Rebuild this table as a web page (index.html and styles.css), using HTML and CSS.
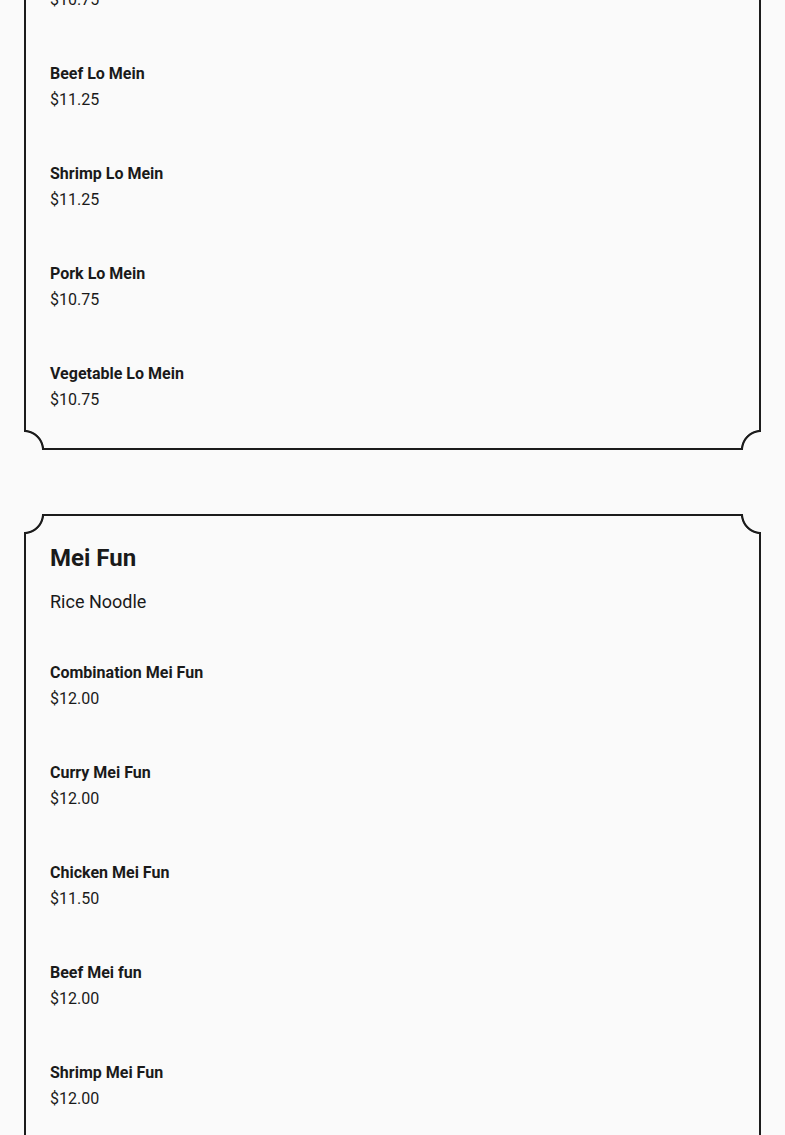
FILE: index.html
```html
<!DOCTYPE html>
<html lang="en">
<head>
<meta charset="utf-8">
<title>Menu</title>
<link rel="stylesheet" href="styles.css">
</head>
<body>
<main class="menu">
  <section class="card card-first">
    <h2 class="card-title">Lo Mein</h2>
    <p class="card-sub">Soft Noodle</p>
    <ul class="items">
      <li class="item"><span class="item-name">Chicken Lo Mein</span><span class="item-price">$10.75</span></li>
      <li class="item"><span class="item-name">Beef Lo Mein</span><span class="item-price">$11.25</span></li>
      <li class="item"><span class="item-name">Shrimp Lo Mein</span><span class="item-price">$11.25</span></li>
      <li class="item"><span class="item-name">Pork Lo Mein</span><span class="item-price">$10.75</span></li>
      <li class="item"><span class="item-name">Vegetable Lo Mein</span><span class="item-price">$10.75</span></li>
    </ul>
  </section>
  <section class="card">
    <h2 class="card-title">Mei Fun</h2>
    <p class="card-sub">Rice Noodle</p>
    <ul class="items">
      <li class="item"><span class="item-name">Combination Mei Fun</span><span class="item-price">$12.00</span></li>
      <li class="item"><span class="item-name">Curry Mei Fun</span><span class="item-price">$12.00</span></li>
      <li class="item"><span class="item-name">Chicken Mei Fun</span><span class="item-price">$11.50</span></li>
      <li class="item"><span class="item-name">Beef Mei fun</span><span class="item-price">$12.00</span></li>
      <li class="item"><span class="item-name">Shrimp Mei Fun</span><span class="item-price">$12.00</span></li>
      <li class="item"><span class="item-name">Pork Mei Fun</span><span class="item-price">$11.50</span></li>
    </ul>
  </section>
</main>
</body>
</html>
```

FILE: styles.css
```css
html, body {
  margin: 0;
  padding: 0;
  background: #fafafa;
}
body {
  font-family: Roboto, "Liberation Sans", Arial, sans-serif;
  color: #1a1a1a;
}
.menu {
  display: flex;
  flex-direction: column;
  gap: 64px;
  padding: 0 24px 64px;
}
.card {
  position: relative;
  border: 2px solid #1c1c1c;
  padding: 25px 24px 35px;
  display: flex;
  flex-direction: column;
}
.card-first {
  margin-top: -185px;
}
.card::before,
.card::after {
  content: "";
  position: absolute;
  left: -2px;
  right: -2px;
  height: 22px;
  pointer-events: none;
}
.card::before {
  top: -2px;
  background:
    radial-gradient(circle at 0 0, #fafafa 17.5px, #1c1c1c 18.3px, #1c1c1c 19.7px, rgba(250,250,250,0) 20.5px) left top / 22px 22px no-repeat,
    radial-gradient(circle at 100% 0, #fafafa 17.5px, #1c1c1c 18.3px, #1c1c1c 19.7px, rgba(250,250,250,0) 20.5px) right top / 22px 22px no-repeat;
}
.card::after {
  bottom: -2px;
  background:
    radial-gradient(circle at 0 100%, #fafafa 17.5px, #1c1c1c 18.3px, #1c1c1c 19.7px, rgba(250,250,250,0) 20.5px) left bottom / 22px 22px no-repeat,
    radial-gradient(circle at 100% 100%, #fafafa 17.5px, #1c1c1c 18.3px, #1c1c1c 19.7px, rgba(250,250,250,0) 20.5px) right bottom / 22px 22px no-repeat;
}
.card-title {
  margin: 0;
  font-size: 24px;
  line-height: 34px;
  font-weight: 700;
}
.card-sub {
  margin: 13px 0 0;
  font-size: 18px;
  line-height: 28px;
  font-weight: 400;
}
.items {
  list-style: none;
  margin: 44px 0 0;
  padding: 0;
  display: flex;
  flex-direction: column;
  gap: 48px;
}
.item {
  display: flex;
  flex-direction: column;
}
.item-name {
  font-size: 16px;
  line-height: 26px;
  font-weight: 700;
}
.item-price {
  font-size: 16px;
  line-height: 26px;
  font-weight: 400;
}
```
